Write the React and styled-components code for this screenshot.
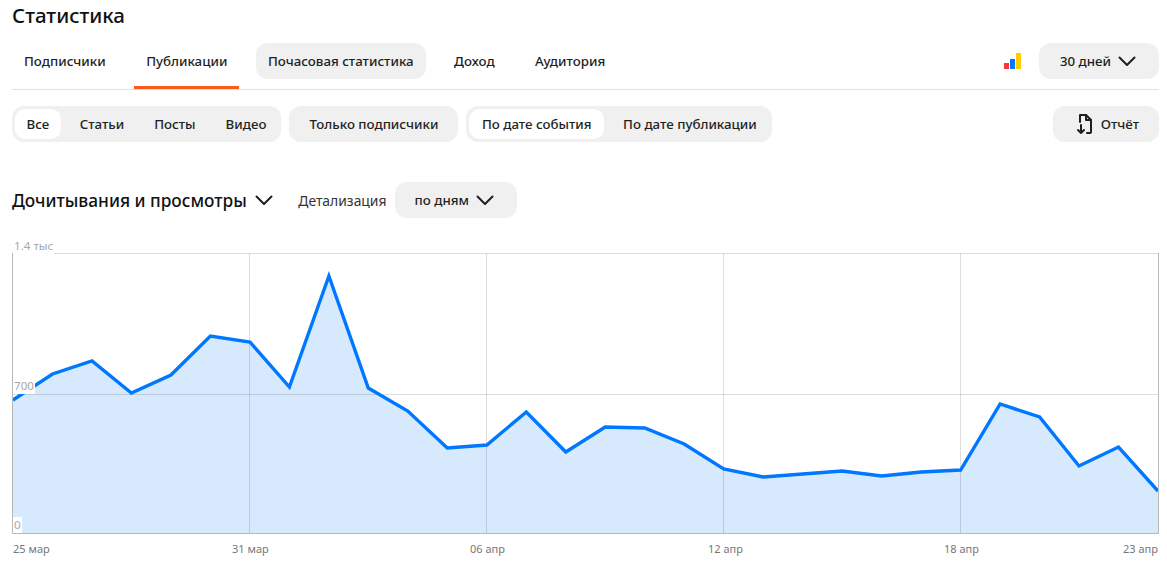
import styled, { createGlobalStyle } from "styled-components";

const GlobalStyle = createGlobalStyle`
	html, body {
		margin: 0;
		padding: 0;
		background: #fff;
	}
	body {
		font-family: "Noto Sans", "Open Sans", sans-serif;
		color: #1f1f1f;
	}
`;

const Page = styled.div`
	width: 1147px;
	height: 580px;
	padding: 0 8px 0 12px;
	overflow: hidden;
`;
const Title = styled.h1`
	margin: 0;
	height: 43px;
	padding-top: 2px;
	box-sizing: border-box;
	font-size: 20.5px;
	line-height: 26px;
	font-weight: 500;
	color: #111;
`;
const TabBar = styled.div`
	display: flex;
	align-items: flex-start;
	height: 46px;
	border-bottom: 1px solid #e2e2e2;
`;
const Tab = styled.div`
	height: 36px;
	margin-right: 16.5px;
	padding: 0 12px;
	box-sizing: border-box;
	display: flex;
	align-items: center;
	position: relative;
	font-size: 13.3px;
	font-weight: 500;
	border-radius: 12px;
	background: ${(p) => (p.$hover ? "#f0f0f0" : "transparent")};
	${(p) =>
		p.$active &&
		`&::after {
			content: "";
			position: absolute;
			left: 0;
			right: 0;
			bottom: -10px;
			height: 3px;
			background: #fc5a1f;
		}`}
`;
const Spacer = styled.div`
	flex: 1;
`;
const Logo = styled.svg`
	margin: 10px 18px 0 0;
`;
const Pill = styled.div`
	height: 36px;
	box-sizing: border-box;
	padding: 0 ${(p) => p.$right || 20}px 0 ${(p) => p.$left || 20}px;
	display: flex;
	align-items: center;
	gap: 7px;
	background: #f0f0f0;
	border-radius: 12px;
	font-size: 13.3px;
	font-weight: 500;
`;
const FilterRow = styled.div`
	display: flex;
	gap: 8px;
	margin-top: 16px;
`;
const Segmented = styled.div`
	height: 36px;
	box-sizing: border-box;
	padding: 3px 0 3px 3px;
	display: flex;
	background: #f0f0f0;
	border-radius: 12px;
`;
const Segment = styled.div`
	padding: 0 15px;
	display: flex;
	align-items: center;
	font-size: 13.3px;
	font-weight: 500;
	border-radius: 10px;
`;
const ActiveSegment = styled(Segment)`
	padding: 0 ${(p) => p.$pad}px;
	margin-right: ${(p) => p.$gap}px;
	background: #fff;
`;
const HeadRow = styled.div`
	display: flex;
	align-items: center;
	margin-top: 40px;
	height: 36px;
`;
const Heading = styled.div`
	margin-right: 8px;
	font-size: 17.3px;
	font-weight: 500;
	color: #111;
`;
const DetailLabel = styled.div`
	margin: 0 8px 0 25.5px;
	font-size: 13.9px;
	color: #333;
`;
const Chevron = styled.svg`
	flex: none;
`;
const Chart = styled.div`
	position: relative;
	margin-top: 35px;
	width: 1147px;
	height: 281px;
`;
const Plot = styled.svg`
	display: block;
`;
const YLabel = styled.span`
	position: absolute;
	left: 1px;
	top: ${(p) => p.$top}px;
	padding: 0 1px;
	font-size: 11.6px;
	line-height: 16px;
	color: #a8a8a8;
	background: #fff;
`;
const XLabels = styled.div`
	position: relative;
	height: 16px;
	margin-top: 7px;
`;
const XLabel = styled.span`
	position: absolute;
	top: 0;
	left: ${(p) => p.$left}px;
	font-size: 11px;
	line-height: 16px;
	color: #777;
	white-space: nowrap;
`;

const Down = () => (
	<Chevron width="18" height="11" viewBox="0 0 18 11" fill="none">
		<path d="M1.5 1.5 9 9l7.5-7.5" stroke="#1f1f1f" strokeWidth="2" strokeLinecap="round" strokeLinejoin="round" />
	</Chevron>
);

const points = [
	400, 374, 361, 393, 375, 336, 342, 387, 276, 388, 411, 448, 445, 412, 452, 427,
	428, 444, 469, 477, 474, 471, 476, 472, 470, 404, 417, 466, 447, 491,
];
const chartTop = 253;
const line = points
	.map((y, i) => `${(1 + (i * 1145) / 29).toFixed(1)},${y - chartTop}`)
	.join(" ");

function App() {
	return (
		<Page>
			<GlobalStyle />
			<Title>Статистика</Title>
			<TabBar>
				<Tab>Подписчики</Tab>
				<Tab $active>Публикации</Tab>
				<Tab $hover>Почасовая статистика</Tab>
				<Tab>Доход</Tab>
				<Tab>Аудитория</Tab>
				<Spacer />
				<Logo width="17" height="16" viewBox="0 0 17 16">
					<rect x="0" y="10" width="5" height="6" fill="#ff3333" />
					<rect x="6" y="6" width="5" height="10" fill="#0077ff" />
					<rect x="12" y="0" width="5" height="16" fill="#ffcc00" />
				</Logo>
				<Pill $left={21} $right={23}>
					30 дней
					<Down />
				</Pill>
			</TabBar>
			<FilterRow>
				<Segmented>
					<ActiveSegment $pad={11.5} $gap={4}>Все</ActiveSegment>
					<Segment>Статьи</Segment>
					<Segment>Посты</Segment>
					<Segment>Видео</Segment>
				</Segmented>
				<Pill>Только подписчики</Pill>
				<Segmented>
					<ActiveSegment $pad={12.5} $gap={4}>По дате события</ActiveSegment>
					<Segment>По дате публикации</Segment>
				</Segmented>
				<Spacer />
				<Pill $left={23}>
					<svg width="18" height="22" viewBox="0 0 18 22" fill="none" stroke="#1f1f1f" strokeWidth="2" strokeLinecap="round" strokeLinejoin="round">
						<path d="M4 9V2h6l5 5v12a1 1 0 0 1-1 1h-3" />
						<path d="M10 2v5h5" />
						<path d="M5 12v8M2 17l3 3 3-3" />
					</svg>
					Отчёт
				</Pill>
			</FilterRow>
			<HeadRow>
				<Heading>Дочитывания и просмотры</Heading>
				<Down />
				<DetailLabel>Детализация</DetailLabel>
				<Pill $right={23}>
					по дням
					<Down />
				</Pill>
			</HeadRow>
			<Chart>
				<Plot width="1147" height="281" viewBox="0 0 1147 281">
					<polygon points={`1,280 ${line} 1146,280`} fill="#d7e9fd" />
					<path d="M237.5 0V280M474.5 0V280M711.5 0V280M948.5 0V280M0 141.5H1146" stroke="#000" strokeOpacity="0.13" />
					<polyline points={line} fill="none" stroke="#0077ff" strokeWidth="3.4" strokeLinejoin="miter" />
					<path d="M.5 0V280.500H1146.500V0H.5" fill="none" stroke="#b8b8b8" />
				</Plot>
				<YLabel $top={-15}>1.4 тыс</YLabel>
				<YLabel $top={125}>700</YLabel>
				<YLabel $top={264}>0</YLabel>
			</Chart>
			<XLabels>
				<XLabel $left={1}>25 мар</XLabel>
				<XLabel $left={220}>31 мар</XLabel>
				<XLabel $left={458}>06 апр</XLabel>
				<XLabel $left={696}>12 апр</XLabel>
				<XLabel $left={932}>18 апр</XLabel>
				<XLabel $left={1111}>23 апр</XLabel>
			</XLabels>
		</Page>
	);
}

export default App;
